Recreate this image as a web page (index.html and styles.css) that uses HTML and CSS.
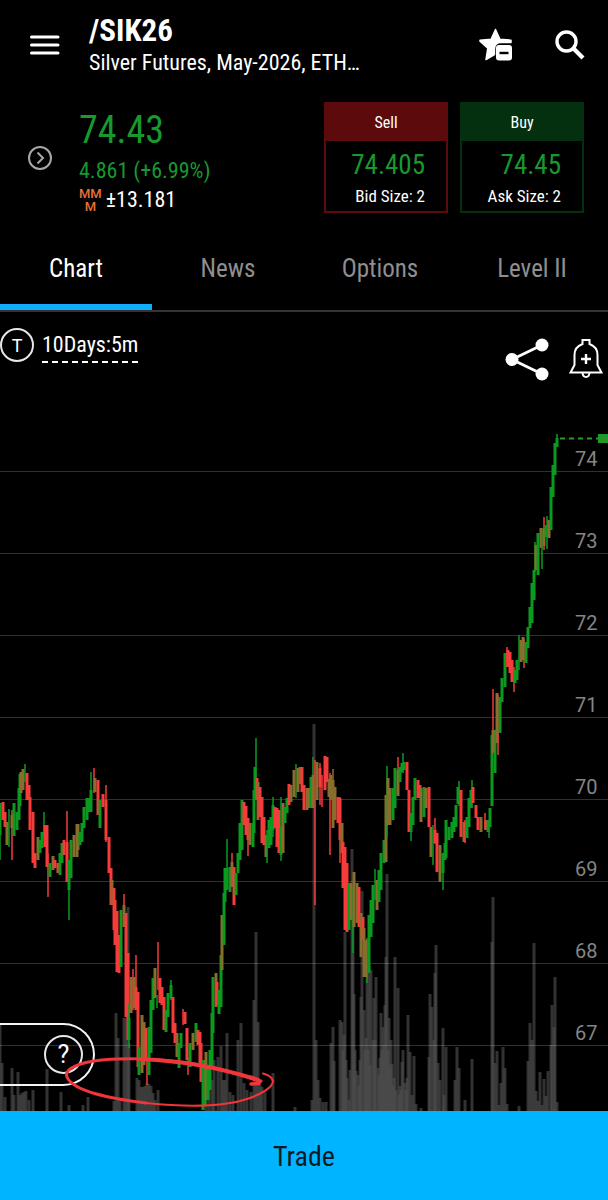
FILE: index.html
```html
<!DOCTYPE html>
<html lang="en">
<head>
  <meta charset="UTF-8" />
  <meta name="viewport" content="width=device-width, initial-scale=1" />
  <title>/SIK26</title>
  <link rel="stylesheet" href="styles.css">
</head>
<body>

<!-- Top bar -->
<header class="topbar">
  <button class="icon-btn" aria-label="Menu">
    <svg width="30" height="22" viewBox="0 0 30 22"><path d="M1.500 3H28M1.500 11H28M1.500 19H28" stroke="#fff" stroke-width="3" stroke-linecap="round"/></svg>
  </button>
  <div class="symbol">
    <h1>/SIK26</h1>
    <p>Silver Futures, May-2026, ETH…</p>
  </div>
  <button class="icon-btn" aria-label="Remove from watchlist">
    <svg width="34" height="34" viewBox="0 0 34 34">
      <path d="M16.500 1.500l4.400 9.700L32 12.200V14.500H22Q15.500 14.500 15.500 21V26.500L7 31.500 8.800 20.300 1 13.300V12.200L12.100 11.200z" fill="#fff" stroke="#fff" stroke-width="1.500" stroke-linejoin="round"/>
      <rect x="17" y="17" width="16" height="15.500" rx="3" fill="#fff"/>
      <path d="M20.500 25h9" stroke="#000" stroke-width="2.400"/>
    </svg>
  </button>
  <button class="icon-btn" aria-label="Search">
    <svg width="30" height="30" viewBox="0 0 30 30" fill="none" stroke="#fff"><circle cx="11.500" cy="11.500" r="9.500" stroke-width="3.400"/><path d="M18 18l10 10" stroke-width="4.200"/></svg>
  </button>
</header>

<!-- Quote -->
<section class="quote">
  <button class="icon-btn" aria-label="Expand quote">
    <svg width="24" height="24" viewBox="0 0 24 24" fill="none" stroke="#a8a8a8" stroke-width="2"><circle cx="12" cy="12" r="11"/><path d="M9.500 6.500l5.500 5.500-5.500 5.500"/></svg>
  </button>
  <div class="last">
    <strong class="price">74.43</strong>
    <span class="change">4.861 (+6.99%)</span>
    <span class="move"><span class="mmm">MM<br>M</span>±13.181</span>
  </div>
  <button class="side sell">
    <span class="side-name">Sell</span>
    <span class="side-body"><span class="side-price">74.405</span><span>Bid Size: 2</span></span>
  </button>
  <button class="side buy">
    <span class="side-name">Buy</span>
    <span class="side-body"><span class="side-price">74.45</span><span>Ask Size: 2</span></span>
  </button>
</section>

<nav class="tabs">
  <a href="#chart" class="active">Chart</a>
  <a href="#news">News</a>
  <a href="#options">Options</a>
  <a href="#level2">Level II</a>
</nav>

<!-- Chart -->
<main class="chart" id="chart">
  <svg class="plot" viewBox="0 312 608 799">
    <g id="grid" class="grid"></g>
    <g id="volume" class="volume"></g>
    <g id="candles"></g>
    <path d="M560 438.500h38" class="last-line"/>
    <rect x="598" y="434" width="10" height="9" class="last-tag"/>
  </svg>

  <div class="chart-tools">
    <button class="circle-btn" aria-label="Trade type">T</button>
    <button class="range">10Days:5m</button>
    <button class="icon-btn share" aria-label="Share">
      <svg width="44" height="44" viewBox="0 0 44 44"><path d="M37 8L7 22.500 37 37" fill="none" stroke="#fff" stroke-width="2.800"/><circle cx="7" cy="22.500" r="6.500" fill="#fff"/><circle cx="37" cy="8" r="6.500" fill="#fff"/><circle cx="37" cy="37" r="6.500" fill="#fff"/></svg>
    </button>
    <button class="icon-btn bell" aria-label="Add alert">
      <svg width="34" height="42" viewBox="0 0 34 42" fill="none" stroke="#fff" stroke-width="2">
        <path d="M13.500 6V2h7v4C26 8 28.500 12 28.500 17v10l4 7.500H1.500l4-7.500V17C5.500 12 8 8 13.500 6z"/>
        <path d="M13.500 35q.5 4 3.500 4t3.500-4"/><path d="M17 16v10M12 21h10" stroke-width="2.400"/>
      </svg>
    </button>
  </div>

  <div class="help">
    <button class="help-btn" aria-label="Help">?</button>
  </div>

  <svg class="plot drawing" viewBox="0 312 608 799" fill="none" stroke="#f0353b" stroke-linecap="round">
    <path d="M261 1081C245 1076 222 1069 200 1065C160 1058 120 1057 94 1061C75 1064 64 1070 67 1077C73 1091 111 1099 146 1103" stroke-width="3"/>
    <path d="M258 1080C240 1074 220 1069 198 1065C182 1062 160 1060 140 1059" stroke-width="4"/>
    <path d="M146 1103C185 1107 223 1107 247 1099C262 1094 273 1087 273 1081Q272 1076 263 1073.500" stroke-width="2"/>
    <path d="M250 1077Q262 1081 259 1083.500L251 1084" stroke-width="3.500"/>
  </svg>
</main>

<button class="trade">Trade</button>

<script src="chart.js"></script>
</body>
</html>
```
FILE: styles.css
```css
* {
  box-sizing: border-box;
}

body {
  display: flex;
  flex-direction: column;
  min-height: 100vh;
  margin: 0;
  background: #000;
  color: #fff;
  font-family: 'Roboto Condensed', 'Liberation Sans Narrow', Roboto, sans-serif;
}

button {
  padding: 0;
  border: none;
  background: none;
  color: inherit;
  font: inherit;
  cursor: pointer;
}

svg {
  display: block;
}

.icon-btn {
  flex: none;
}

/* top bar */
.topbar {
  display: flex;
  align-items: center;
  gap: 29px;
  height: 90px;
  padding: 0 23px 0 30px;
}

.topbar .icon-btn + .icon-btn {
  margin-left: 13px;
}

.symbol {
  flex: 1;
  min-width: 0;
}

.symbol h1 {
  margin: 0;
  font-size: 31px;
  line-height: 36px;
}

.symbol p {
  margin: 0;
  overflow: hidden;
  font-size: 22px;
  line-height: 28px;
  white-space: nowrap;
}

/* quote */
.quote {
  display: flex;
  align-items: flex-start;
  gap: 12px;
  height: 140px;
  padding: 12px 24px 0 28px;
}

.quote > .icon-btn {
  margin: 44px 15px 0 0;
}

.last {
  display: flex;
  flex: 1;
  flex-direction: column;
  padding-top: 1px;
  white-space: nowrap;
}

.price {
  color: #17992e;
  font-size: 38px;
  font-weight: 400;
  line-height: 54px;
}

.change {
  color: #17992e;
  font-size: 22px;
  line-height: 28px;
}

.move {
  display: flex;
  align-items: center;
  gap: 4px;
  font-size: 22px;
  line-height: 30px;
}

.mmm {
  color: #e8703a;
  font-family: Roboto, sans-serif;
  font-size: 13px;
  font-weight: 500;
  line-height: 13px;
  text-align: center;
}

.side {
  width: 124px;
  border: 2px solid;
}

.sell {
  border-color: #5c0a0b;
}

.buy {
  border-color: #04300f;
}

.side-name {
  display: block;
  font-size: 16px;
  line-height: 37px;
}

.sell .side-name {
  background: #5c0a0b;
}

.buy .side-name {
  background: #04300f;
}

.side-body {
  display: flex;
  flex-direction: column;
  height: 70px;
  padding: 7px 21px 0 0;
  font-size: 17px;
  line-height: 28px;
  text-align: right;
}

.side-price {
  color: #17992e;
  font-size: 27px;
  line-height: 34px;
}

/* tabs */
.tabs {
  display: flex;
  border-bottom: 2px solid #333;
}

.tabs a {
  flex: 1;
  height: 80px;
  border-bottom: 6px solid transparent;
  color: #8f8f8f;
  font-size: 25px;
  line-height: 78px;
  text-align: center;
  text-decoration: none;
}

.tabs .active {
  border-color: #11adfa;
  color: #fff;
}

/* chart */
.chart {
  position: relative;
  flex: 1;
  overflow: hidden;
}

.plot {
  width: 100%;
}

.grid line {
  stroke: #303030;
}

.grid text {
  fill: #858585;
  font-family: Roboto, sans-serif;
  font-size: 20px;
}

.volume {
  opacity: 0.3;
  stroke: #fff;
  stroke-opacity: 0.65;
  stroke-width: 3;
}

.up {
  stroke: #0b9a20;
}

.down {
  stroke: #f63c3b;
}

.mixed {
  stroke: #886d2d;
}

.last-line {
  stroke: #2b9a2d;
  stroke-width: 2;
  stroke-dasharray: 5 4;
}

.last-tag {
  fill: #21992a;
}

.drawing {
  position: absolute;
  top: 0;
  left: 0;
  pointer-events: none;
}

.chart-tools {
  position: absolute;
  top: 0;
  left: 0;
  display: flex;
  align-items: flex-start;
  gap: 8px;
  width: 100%;
  padding: 16px 5px 0 0;
}

.circle-btn,
.help-btn {
  border: 2px solid #e8e8e8;
  border-radius: 50%;
  font-family: Roboto, sans-serif;
}

.circle-btn {
  width: 34px;
  height: 34px;
  font-size: 18px;
}

.range {
  border-bottom: 2px dashed #fff;
  font-size: 22px;
  line-height: 33px;
}

.share {
  margin: 9px 12px 0 auto;
}

.bell {
  margin-top: 10px;
}

.help {
  position: absolute;
  bottom: 25px;
  left: 0;
  display: flex;
  align-items: center;
  justify-content: flex-end;
  width: 95px;
  height: 63px;
  padding-right: 10px;
  border: 2px solid #f4f4f4;
  border-left: none;
  border-radius: 0 32px 32px 0;
}

.help-btn {
  width: 39px;
  height: 39px;
  font-size: 25px;
}

.trade {
  height: 89px;
  padding-top: 2px;
  background: #00b4ff;
  color: #0a1a24;
  font-size: 28px;
}
```
FILE: chart.js
```js
// x, top, bottom, kind: g/r/m is a wick, G/R/M a body (up, down, mixed)
const candles = `
0 803 860 g,0 803 835 G,3 802 820 R,5 812 827 R,7 822 845 M,9 809 847 g,12 815 828 M,12 810 860 r,14 803 836 G,17 812 830 G,
19 788 820 G,20 774 806 G,21 772 793 M,23 769 790 M,25 764 782 g,27 773 800 R,29 785 800 R,30 797 830 R,33 812 863 R,35 853 868 R,
38 837 860 M,40 840 853 G,42 832 848 G,44 812 837 g,45 825 847 R,47 825 867 R,48 853 897 r,50 863 877 G,53 856 870 M,55 860 868 R,
58 863 873 R,60 853 875 G,62 843 863 G,64 840 855 R,67 811 880 r,67 842 882 R,69 877 920 g,69 860 890 G,71 840 878 G,74 835 857 M,
77 824 857 M,78 824 850 M,80 832 845 G,82 823 842 G,84 807 828 G,87 798 820 G,89 798 812 G,91 772 812 g,91 790 812 G,94 768 793 r,
95 778 792 M,98 780 815 R,100 800 828 G,103 794 807 R,106 785 842 r,106 800 840 R,109 837 873 R,111 868 905 R,112 880 905 M,114 888 930 R,
115 900 945 R,117 911 972 R,119 935 973 R,121 910 967 G,124 894 927 r,124 905 927 M,126 913 1017 R,128 953 1040 R,129 1003 1048 g,129 1018 1040 G,
131 977 1013 M,133 969 1010 r,134 977 1008 M,136 955 1010 r,136 987 1010 R,138 992 1067 R,139 1047 1075 G,142 1015 1073 M,144 1022 1065 M,146 1028 1060 R,
147 1060 1085 r,149 1027 1075 G,151 1000 1053 G,153 978 1010 G,155 968 998 M,157 995 1008 g,158 942 990 r,160 978 1003 R,162 987 1005 R,164 997 1030 R,
166 1010 1032 G,168 993 1017 G,171 980 1000 g,171 985 998 G,173 997 1033 R,175 1023 1043 R,177 1033 1057 M,179 1043 1068 G,181 1033 1048 G,183 1009 1025 r,
185 1012 1024 R,187 1028 1060 R,188 1058 1075 r,190 1043 1067 G,193 1033 1050 M,196 1023 1042 G,198 1030 1045 R,200 1032 1063 R,201 1043 1082 R,203 1060 1110 G,
205 1060 1105 G,206 1052 1100 M,208 1067 1100 G,210 1050 1090 G,212 1013 1067 G,213 977 1033 G,216 973 1007 M,217 982 1005 R,219 990 1014 G,221 955 1007 G,
222 915 970 M,224 893 945 G,225 868 902 G,227 839 868 g,227 868 890 G,230 867 892 G,232 853 887 r,232 862 887 M,234 867 905 R,236 873 895 G,
238 853 873 G,240 823 860 G,242 800 850 G,244 802 825 R,246 806 835 R,248 823 856 r,248 818 840 R,250 823 845 M,253 823 847 G,254 790 833 G,
256 738 792 g,255 767 800 G,257 778 800 R,258 782 820 M,260 787 817 R,262 797 843 R,264 817 845 R,266 835 857 M,267 830 863 g,269 820 848 G,
271 817 845 G,273 797 837 g,273 805 830 G,275 807 828 R,277 808 847 R,279 810 853 R,281 797 861 g,281 827 855 G,283 803 853 M,285 807 823 G,
287 798 813 G,289 784 805 R,291 785 802 M,294 770 797 M,296 764 798 g,298 768 792 M,300 767 784 M,302 767 792 R,304 785 810 R,307 788 810 M,
309 788 808 M,311 777 808 G,313 757 800 g,315 760 905 r,313 775 808 M,317 762 800 M,320 763 805 r,320 768 787 R,322 775 807 r,325 756 790 R,
327 757 782 R,329 779 797 M,330 773 855 r,331 775 800 M,333 769 828 m,333 780 828 M,335 787 820 M,338 797 823 R,340 797 863 r,340 798 840 R,
342 823 853 M,343 842 888 R,345 847 930 R,347 863 932 R,349 883 930 G,351 883 920 M,353 887 953 g,354 872 927 M,357 883 923 M,359 887 927 R,
361 913 957 M,363 917 940 R,364 928 977 M,367 938 983 g,366 940 977 M,369 915 973 G,371 900 937 G,373 885 923 G,375 869 900 g,377 880 910 M,
379 870 902 G,381 853 890 G,384 840 863 G,386 795 862 M,387 766 837 g,388 778 825 M,390 788 825 M,393 788 820 G,395 768 808 G,398 757 795 r,
398 770 796 M,400 767 782 G,403 753 773 g,402 763 772 G,404 762 770 G,407 762 790 R,409 790 832 R,411 813 841 g,411 813 832 G,413 797 825 G,
415 778 800 G,418 780 798 R,420 785 798 R,421 788 822 M,424 787 817 G,426 788 808 M,429 787 827 R,431 827 857 M,433 825 865 g,435 818 844 r,
435 830 843 R,437 833 872 R,440 845 882 M,443 857 890 g,443 853 873 G,445 843 860 G,446 820 858 G,449 827 840 G,452 822 838 G,454 817 832 G,
456 805 827 G,459 781 806 g,458 787 804 G,461 790 837 R,464 822 842 M,465 820 843 r,467 817 838 G,469 798 827 G,472 780 808 g,471 790 808 G,
473 787 803 R,476 805 818 R,478 817 830 R,481 817 832 M,485 813 830 r,486 820 830 R,489 822 838 g,488 820 832 G,490 808 827 G,492 735 806 G,
493 689 753 r,495 730 773 G,493 730 752 M,497 693 743 M,498 695 755 r,500 697 733 G,502 678 702 G,505 653 687 G,507 647 667 r,508 650 667 R,
510 652 673 R,512 660 682 R,514 667 692 r,515 670 683 G,517 660 680 G,519 635 670 g,521 640 662 M,523 637 660 M,524 639 668 r,526 642 663 G,
528 627 648 G,530 607 628 G,532 583 623 G,534 570 600 G,535 542 572 g,536 545 570 M,538 533 575 G,541 528 548 M,542 530 569 g,544 517 550 r,
544 528 546 M,546 525 537 G,547 516 549 g,549 520 538 M,551 487 530 G,553 465 497 G,555 443 475 G,557 434 447 g,557 438 447 G`;

// x, top of each volume bar
const volume = `
0 1025,2 1063,5 1097,12 1068,14 1095,18 1072,20 1095,22 1093,24 1092,26 1091,29 1100,33 1090,47 1069,61 1092,69 1105,83 1105,88 1097,
114 1101,116 1013,118 1038,120 1098,124 1018,126 1018,128 907,129 1043,137 1078,139 1080,141 1087,143 1087,145 1086,147 1083,149 1084,151 1086,153 1093,158 1090,155 1100,
206 1085,209 1075,212 1080,214 1060,218 1057,221 1046,223 1080,225 1080,227 1033,230 1092,233 1095,238 1040,241 1023,244 1083,247 1090,251 1092,254 1000,256 932,258 1022,260 1085,262 1087,265 1092,273 1073,295 1107,
312 1100,314 724,316 1040,318 1080,320 1098,323 1102,326 1102,331 1043,333 1027,334 1061,340 1020,342 1022,344 1035,345 932,347 1078,349 1100,352 849,353 910,354 994,356 1071,358 1075,359 1086,
361 997,362 891,364 1010,366 1038,367 963,369 965,371 970,373 1040,374 998,376 977,378 1068,380 1058,381 1013,383 1027,385 1005,386 957,387 874,389 1018,391 1040,392 1064,394 1078,395 957,396 1090,398 988,400 1086,402 1062,403 1050,405 1083,407 1078,408 1015,410 1052,412 1095,414 1056,416 1104,421 1108,
429 1057,430 994,432 1007,434 1040,435 973,436 945,438 1063,440 1080,443 1028,444 1095,446 1047,455 1080,457 1047,459 1068,465 1100,472 1059,
492 942,493 897,495 1063,497 1051,499 1105,501 1083,503 1047,505 1068,507 1104,519 1106,528 1061,530 1023,532 1040,534 943,536 1091,538 1101,540 1072,542 1105,544 1079,546 1096,548 1071,551 1045,552 1005,554 1027,555 977,557 1102,
343 1050,346 1060,350 1070,355 1050,360 1060,365 1050,368 1050,370 1065,375 1040,379 1075,382 1050,384 1045,388 1050,390 1065,393 1085,399 1095,401 1090,406 1090`;

const kinds = { g: "up", r: "down", m: "mixed" };

function bar(x, top, bottom, attrs) {
  return `<line x1="${x}" x2="${x}" y1="${top}" y2="${bottom}" ${attrs}/>`;
}

document.getElementById("candles").innerHTML = candles.trim().split(/,\s*/).map(row => {
  const [x, top, bottom, kind] = row.split(" ");
  const body = kind === kind.toUpperCase();
  return bar(x, top, bottom, `class="${kinds[kind.toLowerCase()]}" stroke-width="${body ? 3 : 1.5}"`);
}).join("");

document.getElementById("volume").innerHTML = volume.trim().split(/,\s*/).map(row => {
  const [x, top] = row.split(" ");
  return bar(x, top, 1111, "");
}).join("");

// horizontal price lines
const grid = document.getElementById("grid");
for (let price = 74, y = 471.5; price >= 67; price--, y += 82) {
  grid.innerHTML += `<line x1="0" x2="608" y1="${y}" y2="${y}"/><text x="575" y="${y - 6}">${price}</text>`;
}
```
